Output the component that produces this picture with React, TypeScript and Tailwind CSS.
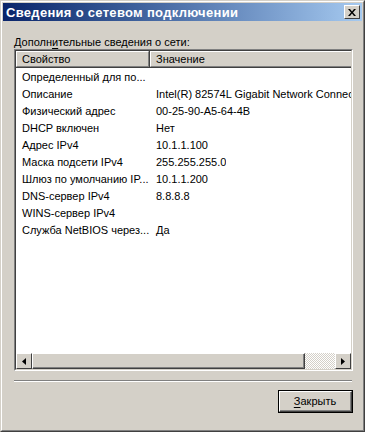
const rows: [string, string][] = [
  ['Определенный для по...', ''],
  ['Описание', 'Intel(R) 82574L Gigabit Network Connect'],
  ['Физический адрес', '00-25-90-A5-64-4B'],
  ['DHCP включен', 'Нет'],
  ['Адрес IPv4', '10.1.1.100'],
  ['Маска подсети IPv4', '255.255.255.0'],
  ['Шлюз по умолчанию IP...', '10.1.1.200'],
  ['DNS-сервер IPv4', '8.8.8.8'],
  ['WINS-сервер IPv4', ''],
  ['Служба NetBIOS через...', 'Да'],
];

function ArrowBtn({ dir }: { dir: 'left' | 'right' }) {
  return (
    <div className="w-4 h-4 shrink-0 border border-t-white border-l-white border-b-[#404040] border-r-[#404040] bg-[#d4d0c8] flex items-center justify-center">
      <svg width="4" height="7" viewBox="0 0 4 7">
        {dir === 'left' ? <path d="M4 0 L0 3.5 L4 7 Z" fill="#000" /> : <path d="M0 0 L4 3.5 L0 7 Z" fill="#000" />}
      </svg>
    </div>
  );
}

export default function App() {
  return (
    <div className="w-[365px] h-[432px] bg-[#d4d0c8] border border-t-[#d4d0c8] border-l-[#d4d0c8] border-b-[#404040] border-r-[#404040] font-['Liberation_Sans',Arial,sans-serif] text-[11px] text-black select-none">
      <div className="h-full border border-t-white border-l-white border-b-[#808080] border-r-[#808080] p-px flex flex-col">
        {/* Title bar */}
        <div className="h-[18px] shrink-0 flex items-center justify-between bg-gradient-to-r from-[#0a246a] to-[#a6caf0] pl-[3px] pr-[2px]">
          <span className="text-white font-bold text-[13px] leading-none tracking-[0.3px]">Сведения о сетевом подключении</span>
          <div className="w-4 h-[14px] bg-[#d4d0c8] border border-t-white border-l-white border-b-[#404040] border-r-[#404040] flex items-center justify-center">
            <svg width="8" height="7" viewBox="0 0 8 7">
              <path d="M0 0h2l2 2.5L6 0h2L5 3.5 8 7H6L4 4.5 2 7H0l3-3.5z" fill="#000" />
            </svg>
          </div>
        </div>

        {/* Body */}
        <div className="flex-1 flex flex-col pl-[11px] pr-[9px]">
          <div className="mt-[14px] h-[14px] leading-[14px]">
            Дополн<span className="underline underline-offset-[2px]">и</span>тельные сведения о сети:
          </div>

          {/* List view */}
          <div className="h-[322px] border border-t-[#808080] border-l-[#808080] border-b-white border-r-white">
            <div className="h-full border border-t-[#404040] border-l-[#404040] border-b-[#d4d0c8] border-r-[#d4d0c8] bg-white flex flex-col">
              <div className="h-[17px] shrink-0 flex bg-[#d4d0c8]">
                <div className="w-[134px] shrink-0 border-r border-b border-r-[#404040] border-b-[#404040]">
                  <div className="h-full border border-t-white border-l-white border-b-[#808080] border-r-[#808080] pl-[5px] leading-[14px]">
                    Свойство
                  </div>
                </div>
                <div className="flex-1 border-b border-b-[#404040]">
                  <div className="h-full border-t border-l border-b border-t-white border-l-white border-b-[#808080] pl-[5px] leading-[14px]">
                    Значение
                  </div>
                </div>
              </div>
              <div className="flex-1 overflow-hidden pt-[1px]">
                {rows.map(([k, v]) => (
                  <div key={k} className="h-[17px] flex items-center whitespace-nowrap">
                    <div className="w-[134px] shrink-0 pl-[6px]">{k}</div>
                    <div className="pl-[6px] overflow-hidden">{v}</div>
                  </div>
                ))}
              </div>
              {/* Horizontal scrollbar */}
              <div className="h-4 shrink-0 flex bg-[#d4d0c8]">
                <ArrowBtn dir="left" />
                <div className="w-[273px] h-4 shrink-0 border border-t-white border-l-white border-b-[#404040] border-r-[#404040]">
                  <div className="h-full border-b border-r border-b-[#808080] border-r-[#808080]" />
                </div>
                <div className="flex-1 bg-[repeating-conic-gradient(#ffffff_0%_25%,#d4d0c8_0%_50%)] bg-[length:2px_2px]" />
                <ArrowBtn dir="right" />
              </div>
            </div>
          </div>

          {/* Separator */}
          <div className="mt-[9px] mr-px border-t border-b border-t-[#808080] border-b-white" />

          {/* Button row */}
          <div className="mt-2 flex justify-end">
            <button className="w-[75px] h-[23px] border border-black bg-[#d4d0c8] p-0">
              <div className="h-full border border-t-white border-l-white border-b-[#404040] border-r-[#404040]">
                <div className="h-full border-b border-r border-b-[#808080] border-r-[#808080] flex items-center justify-center">
                  <span>
                    <span className="underline underline-offset-[2px]">З</span>акрыть
                  </span>
                </div>
              </div>
            </button>
          </div>
        </div>
      </div>
    </div>
  );
}
